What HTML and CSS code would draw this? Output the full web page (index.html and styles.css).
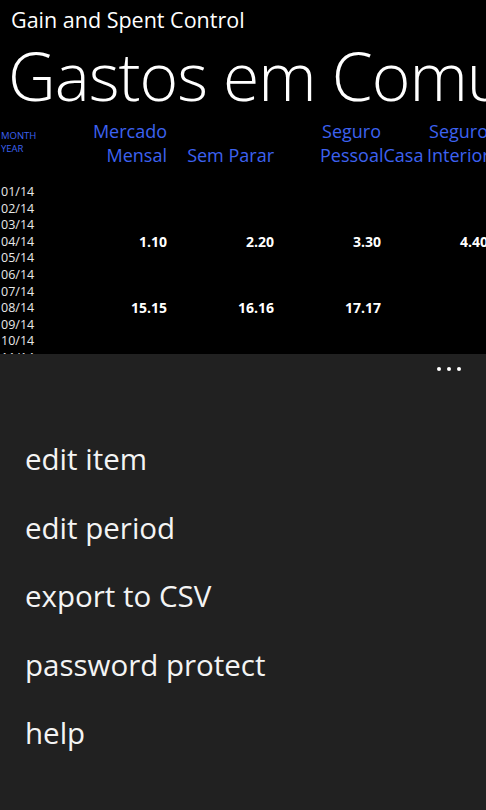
FILE: index.html
```html
<!DOCTYPE html>
<html>
    <head>
        <meta charset="UTF-8">
        <title>Gain and Spent Control</title>
        <link rel="stylesheet" href="styles.css">
    </head>
    <body>
        <div class="screen">
            <div class="content">
                <div class="app-title">Gain and Spent Control</div>
                <div class="page-title">Gastos em Comum</div>
                <div class="grid">
                    <div class="corner">MONTH<br>YEAR</div>
                    <div class="head">Mercado Mensal</div>
                    <div class="head">Sem Parar</div>
                    <div class="head narrow">Seguro PessoalCasa</div>
                    <div class="head narrow">Seguro Interior</div>

                    <div class="month">01/14</div><div class="val"></div><div class="val"></div><div class="val"></div><div class="val"></div>
                    <div class="month">02/14</div><div class="val"></div><div class="val"></div><div class="val"></div><div class="val"></div>
                    <div class="month">03/14</div><div class="val"></div><div class="val"></div><div class="val"></div><div class="val"></div>
                    <div class="month">04/14</div><div class="val">1.10</div><div class="val">2.20</div><div class="val">3.30</div><div class="val">4.40</div>
                    <div class="month">05/14</div><div class="val"></div><div class="val"></div><div class="val"></div><div class="val"></div>
                    <div class="month">06/14</div><div class="val"></div><div class="val"></div><div class="val"></div><div class="val"></div>
                    <div class="month">07/14</div><div class="val"></div><div class="val"></div><div class="val"></div><div class="val"></div>
                    <div class="month">08/14</div><div class="val">15.15</div><div class="val">16.16</div><div class="val">17.17</div><div class="val"></div>
                    <div class="month">09/14</div><div class="val"></div><div class="val"></div><div class="val"></div><div class="val"></div>
                    <div class="month">10/14</div><div class="val"></div><div class="val"></div><div class="val"></div><div class="val"></div>
                    <div class="month">11/14</div><div class="val"></div><div class="val"></div><div class="val"></div><div class="val"></div>
                    <div class="month">12/14</div><div class="val"></div><div class="val"></div><div class="val"></div><div class="val"></div>
                </div>
            </div>
            <div class="appbar">
                <div class="dots"><span></span><span></span><span></span></div>
                <ul class="menu">
                    <li>edit item</li>
                    <li>edit period</li>
                    <li>export to CSV</li>
                    <li>password protect</li>
                    <li>help</li>
                </ul>
            </div>
        </div>
    </body>
</html>
```

FILE: styles.css
```css
html, body {
    margin: 0;
    padding: 0;
    background: #000;
}
body {
    font-family: "Open Sans", "Noto Sans", sans-serif;
    color: #fff;
}
.screen {
    width: 486px;
    height: 810px;
    display: flex;
    flex-direction: column;
    overflow: hidden;
}
.content {
    height: 354px;
    overflow: hidden;
    flex: none;
}
.app-title {
    font-size: 21.5px;
    line-height: 26px;
    padding: 7px 0 0 11px;
    white-space: nowrap;
}
.page-title {
    font-size: 66px;
    font-weight: 300;
    line-height: 80px;
    margin: 2px 0 0 8px;
    white-space: nowrap;
    letter-spacing: -1px;
}
.grid {
    display: grid;
    grid-template-columns: 74px 93px 107px 107px 107px;
    margin-top: 4px;
}
.corner {
    font-size: 9.5px;
    line-height: 12.5px;
    color: #3d62f0;
    padding: 11px 0 0 1px;
}
.head {
    font-size: 18px;
    line-height: 24px;
    color: #3d62f0;
    text-align: right;
    justify-self: end;
    align-self: end;
    max-width: 100px;
    margin-bottom: 17px;
}
.head.narrow {
    width: 61px;
    justify-self: start;
    margin-left: 46px;
}
.month {
    font-size: 12.5px;
    line-height: 16.6px;
    color: #e8e8e8;
    padding-left: 1px;
}
.val {
    font-size: 14px;
    font-weight: bold;
    line-height: 16.6px;
    text-align: right;
}
.appbar {
    flex: 1;
    background: #212121;
}
.dots {
    display: flex;
    justify-content: flex-end;
    gap: 6px;
    padding: 13px 25px 0 0;
}
.dots span {
    width: 4px;
    height: 4px;
    border-radius: 50%;
    background: #fff;
}
.menu {
    list-style: none;
    margin: 0;
    padding: 54px 0 0 25px;
}
.menu li {
    font-size: 29.5px;
    line-height: 68.5px;
    color: #f4f4f4;
    white-space: nowrap;
}
```
